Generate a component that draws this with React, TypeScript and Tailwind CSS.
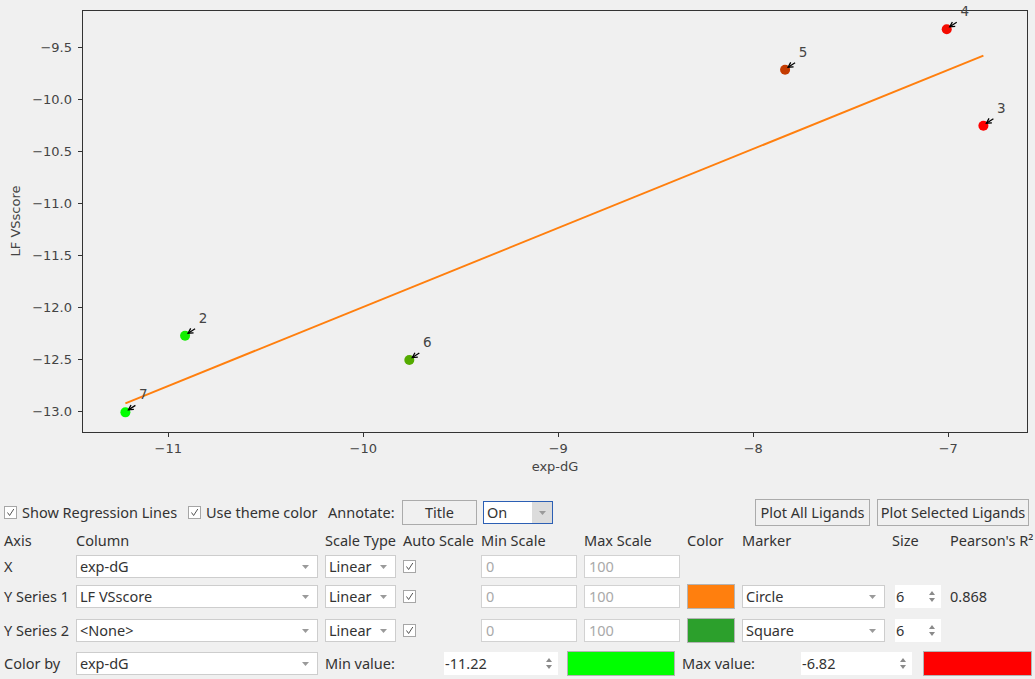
import React from 'react';

// scatter plot data (exp-dG vs LF VSscore)
const POINTS = [
  { id: '7', x: -11.22, y: -13.013 },
  { id: '2', x: -10.914, y: -12.276 },
  { id: '6', x: -9.764, y: -12.51 },
  { id: '5', x: -7.837, y: -9.718 },
  { id: '4', x: -7.008, y: -9.33 },
  { id: '3', x: -6.82, y: -10.257 },
];

const px = (v: number) => 168.3 + (v + 11) * 195;
const py = (v: number) => 47 + (-9.5 - v) * 104;

function colorFor(x: number) {
  const f = Math.min(1, Math.max(0, (x + 11.22) / 4.4));
  const r = Math.round(255 * f);
  const g = Math.round(255 * (1 - f));
  return `rgb(${r},${g},0)`;
}

function Arrow({ cx, cy }: { cx: number; cy: number }) {
  const sx = cx + 10, sy = cy - 7;
  const tx = cx + 3, ty = cy - 2.5;
  const dx = sx - tx, dy = sy - ty;
  const len = Math.hypot(dx, dy);
  const ux = dx / len, uy = dy / len;
  const wing = (a: number) => {
    const c = Math.cos(a), s = Math.sin(a);
    return [tx + 5.5 * (ux * c - uy * s), ty + 5.5 * (ux * s + uy * c)];
  };
  const [ax, ay] = wing(0.5);
  const [bx, by] = wing(-0.5);
  return (
    <g stroke="#000" strokeWidth={1.3} fill="none">
      <line x1={sx} y1={sy} x2={tx} y2={ty} />
      <polyline points={`${ax},${ay} ${tx},${ty} ${bx},${by}`} />
    </g>
  );
}

function Plot() {
  const yTicks = [-9.5, -10, -10.5, -11, -11.5, -12, -12.5, -13];
  const xTicks = [-11, -10, -9, -8, -7];
  const font = 'DejaVu Sans, sans-serif';
  return (
    <svg width={1035} height={497} className="block">
      <rect x={82.5} y={10.5} width={945} height={422} fill="none" stroke="#333" strokeWidth={1} />
      {yTicks.map((t) => (
        <g key={t}>
          <line x1={78} x2={82} y1={Math.round(py(t)) + 0.5} y2={Math.round(py(t)) + 0.5} stroke="#333" />
          <text x={72} y={py(t) + 5} textAnchor="end" fontSize={13} fill="#444" fontFamily={font}>
            {t.toFixed(1).replace('-', '\u2212')}
          </text>
        </g>
      ))}
      {xTicks.map((t) => (
        <g key={t}>
          <line y1={433} y2={437} x1={Math.round(px(t)) + 0.5} x2={Math.round(px(t)) + 0.5} stroke="#333" />
          <text x={px(t)} y={453} textAnchor="middle" fontSize={13} fill="#444" fontFamily={font}>
            {String(t).replace('-', '\u2212')}
          </text>
        </g>
      ))}
      <text x={555} y={471} textAnchor="middle" fontSize={13} fill="#444" fontFamily={font}>exp-dG</text>
      <text x={20} y={221} textAnchor="middle" fontSize={13} fill="#444" fontFamily={font} transform="rotate(-90 20 221)">
        LF VSscore
      </text>
      <line x1={px(-11.22)} y1={403.3} x2={px(-6.82)} y2={55.7} stroke="#ff7f0e" strokeWidth={1.9} />
      {POINTS.map((p) => {
        const cx = px(p.x), cy = py(p.y);
        return (
          <g key={p.id}>
            <circle cx={cx} cy={cy} r={5} fill={colorFor(p.x)} />
            <Arrow cx={cx} cy={cy} />
            <text x={cx + 18} y={cy - 13} textAnchor="middle" fontSize={13.5} fill="#444" fontFamily={font}>{p.id}</text>
          </g>
        );
      })}
    </svg>
  );
}

function Check() {
  return (
    <span className="w-[13px] h-[13px] shrink-0 border border-[#a6a6a6] bg-white flex items-center justify-center">
      <svg width="9" height="9" viewBox="0 0 9 9">
        <polyline points="1.5,4.5 3.6,7.5 7.8,1" fill="none" stroke="#555" strokeWidth="1" />
      </svg>
    </span>
  );
}

function DownTri() {
  return (
    <svg width="7" height="4" viewBox="0 0 7 4" className="shrink-0">
      <polygon points="0,0 7,0 3.5,4" fill="#9a9a9a" />
    </svg>
  );
}

function Combo({ text, className = '' }: { text: string; className?: string }) {
  return (
    <div className={`h-[23px] bg-white border border-[#cdcdcd] flex items-center justify-between pl-[3px] pr-[8px] ${className}`}>
      <span>{text}</span>
      <DownTri />
    </div>
  );
}

function Spin({ text, className = '' }: { text: string; className?: string }) {
  return (
    <div className={`h-[23px] bg-white flex items-center justify-between pl-[1px] pr-[6px] ${className}`}>
      <span>{text}</span>
      <span className="flex flex-col gap-[3px]">
        <svg width="6" height="4" viewBox="0 0 6 4"><polygon points="3,0 6,4 0,4" fill="#8a8a8a" /></svg>
        <svg width="6" height="4" viewBox="0 0 6 4"><polygon points="0,0 6,0 3,4" fill="#8a8a8a" /></svg>
      </span>
    </div>
  );
}

function Field({ text }: { text: string }) {
  return (
    <div className="h-[23px] bg-white border border-[#d2d2d2] flex items-center px-[4px] text-[#a9a9a9]">{text}</div>
  );
}

function Swatch({ color }: { color: string }) {
  return <div className={`h-[25px] border border-[#b4b4b4] ${color}`} />;
}

export default function App() {
  return (
    <div className="w-[1035px] h-[679px] bg-[#f0f0f0] text-[#333] text-[14.5px] whitespace-nowrap font-['Noto_Sans',sans-serif] overflow-hidden">
      <Plot />

      <div className="h-[31px] flex items-center pl-[4px] pr-[6px]">
        <div className="w-[184px] flex items-center gap-[5px]"><Check /><span>Show Regression Lines</span></div>
        <div className="w-[140px] flex items-center gap-[5px]"><Check /><span>Use theme color</span></div>
        <div className="w-[74px]">Annotate:</div>
        <button className="w-[75px] h-[25px] border border-[#ababab] bg-[#f0f0f0]">Title</button>
        <div className="ml-[6px] w-[70px] h-[23px] bg-white border border-[#2c5fb4] flex items-center">
          <span className="flex-1 pl-[3px]">On</span>
          <span className="w-[20px] h-full bg-[#dcdcdc] flex items-center justify-center"><DownTri /></span>
        </div>
        <button className="ml-auto w-[115px] h-[27px] border border-[#ababab] bg-[#f0f0f0]">Plot All Ligands</button>
        <button className="ml-[7px] w-[152px] h-[27px] border border-[#ababab] bg-[#f0f0f0]">Plot Selected Ligands</button>
      </div>

      <div className="grid grid-cols-[65px_242px_71px_71px_96px_96px_48px_143px_51px_1fr] grid-rows-[26px_25px_35px_33px] gap-x-[7px] items-center pl-[4px]">
        <div>Axis</div>
        <div>Column</div>
        <div>Scale Type</div>
        <div>Auto Scale</div>
        <div>Min Scale</div>
        <div>Max Scale</div>
        <div>Color</div>
        <div>Marker</div>
        <div>Size</div>
        <div>Pearson's R²</div>

        <div>X</div>
        <Combo text="exp-dG" />
        <Combo text="Linear" />
        <Check />
        <Field text="0" />
        <Field text="100" />
        <div />
        <div />
        <div />
        <div />

        <div>Y Series 1</div>
        <Combo text="LF VSscore" />
        <Combo text="Linear" />
        <Check />
        <Field text="0" />
        <Field text="100" />
        <Swatch color="bg-[#ff7f0e]" />
        <Combo text="Circle" />
        <Spin text="6" className="ml-[3px] w-[46px]" />
        <div>0.868</div>

        <div>Y Series 2</div>
        <Combo text="<None>" />
        <Combo text="Linear" />
        <Check />
        <Field text="0" />
        <Field text="100" />
        <Swatch color="bg-[#2ca02c]" />
        <Combo text="Square" />
        <Spin text="6" className="ml-[3px] w-[46px]" />
        <div />
      </div>

      <div className="h-[33px] flex items-center pl-[4px]">
        <div className="w-[72px]">Color by</div>
        <Combo text="exp-dG" className="w-[242px]" />
        <div className="ml-[7px] w-[119px]">Min value:</div>
        <Spin text="-11.22" className="w-[114px]" />
        <div className="ml-[9px] w-[108px] h-[25px] bg-[#00ff00] border border-[#b4b4b4]" />
        <div className="ml-[7px] w-[119px]">Max value:</div>
        <Spin text="-6.82" className="w-[111px]" />
        <div className="ml-[11px] w-[109px] h-[25px] bg-[#ff0000] border border-[#b4b4b4]" />
      </div>
    </div>
  );
}
